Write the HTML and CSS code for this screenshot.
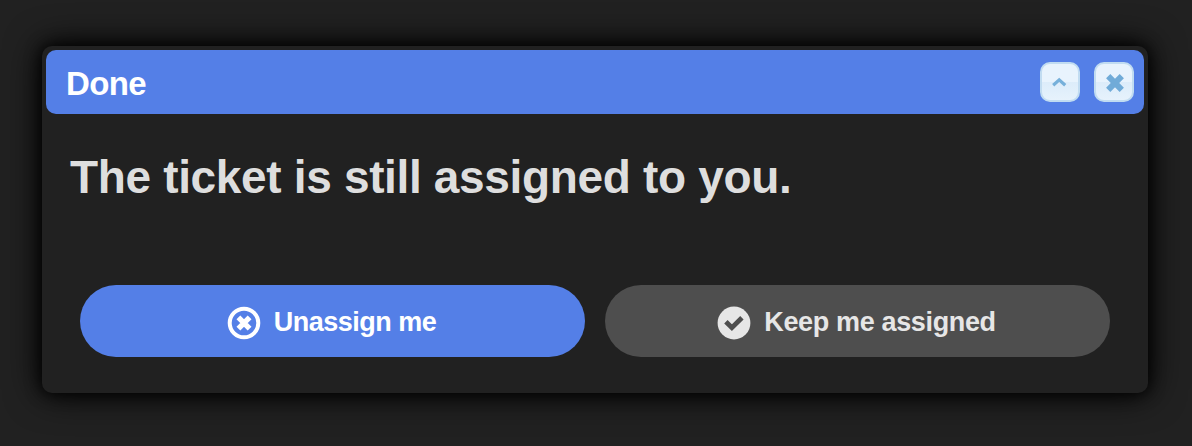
FILE: index.html
```html
<!DOCTYPE html>
<html lang="en">
<head>
<meta charset="utf-8">
<title>Done</title>
<link rel="stylesheet" href="styles.css">
</head>
<body>
<section class="dialog" role="dialog">
  <header class="titlebar">
    <h1 class="title">Done</h1>
    <div class="controls">
      <button class="control" aria-label="Collapse">
        <svg width="40" height="40" viewBox="0 0 40 40"><path d="M13.2 23.2 L19.2 17.8 L25.2 23.2" fill="none" stroke="#76b0da" stroke-width="3.2"/></svg>
      </button>
      <button class="control" aria-label="Close">
        <svg width="40" height="40" viewBox="0 0 40 40"><path d="M14.2 14.2 L27.8 27.8 M27.8 14.2 L14.2 27.8" fill="none" stroke="#70abd8" stroke-width="6"/></svg>
      </button>
    </div>
  </header>
  <div class="content">
    <h2 class="message">The ticket is still assigned to you.</h2>
    <div class="actions">
      <button class="action primary">
        <svg class="icon" width="34" height="34" viewBox="0 0 34 34"><circle cx="17" cy="17" r="14.3" fill="none" stroke="#fff" stroke-width="4"/><path d="M11.4 11.4 L22.6 22.6 M22.6 11.4 L11.4 22.6" fill="none" stroke="#fff" stroke-width="5.4"/></svg>
        <span class="label unassign">Unassign me</span>
      </button>
      <button class="action secondary">
        <svg class="icon" width="34" height="34" viewBox="0 0 34 34"><circle cx="17" cy="17" r="16.4" fill="#e6e6e6"/><path d="M8.9 15.7 L14.9 21.7 L24.9 11.7" fill="none" stroke="#4e4e4e" stroke-width="4.8"/></svg>
        <span class="label keep">Keep me assigned</span>
      </button>
    </div>
  </div>
</section>
</body>
</html>
```
FILE: styles.css
```css
* { box-sizing: border-box; }
body {
  margin: 0;
  height: 446px;
  padding: 46px 44px 53px 42px;
  background: #212121;
  font-family: "Liberation Sans", Arial, sans-serif;
  overflow: hidden;
}
.dialog {
  height: 347px;
  padding: 4px;
  border-radius: 10px;
  background: #212121;
  box-shadow: 0 0 36px #000, 0 0 16px #000;
}
.titlebar {
  display: flex;
  align-items: center;
  justify-content: space-between;
  height: 64px;
  padding: 0 10px 0 20px;
  border-radius: 10px;
  background: #547fe7;
}
.title {
  margin: 4px 0 0;
  color: #fff;
  font-size: 33px;
  line-height: 40px;
  letter-spacing: -0.6px;
}
.controls { display: flex; gap: 14px; }
.control {
  width: 40px;
  height: 40px;
  padding: 0;
  border: 2px solid #c1dcf1;
  border-radius: 10px;
  background: linear-gradient(#e8f3fd 0 50%, #dcecfa 50%, #e6f2fc);
}
.control svg { display: block; margin: -2px; }
.content { padding: 35px 34px 0; }
.message {
  margin: 0 0 0 -10px;
  height: 56px;
  color: #dedede;
  font-size: 46px;
  line-height: 56px;
  letter-spacing: -0.34px;
  white-space: nowrap;
}
.actions {
  display: grid;
  grid-template-columns: 505px 505px;
  gap: 20px;
  margin-top: 80px;
}
.action {
  display: flex;
  align-items: center;
  justify-content: center;
  gap: 13px;
  height: 72px;
  padding: 0 2px 0 0;
  border: 0;
  border-radius: 36px;
  font: bold 27px/32px "Liberation Sans", Arial, sans-serif;
}
.icon { margin-top: 3px; }
.label { margin-top: 2px; }
.unassign { letter-spacing: -0.5px; }
.keep { letter-spacing: -0.35px; }
.primary { background: #547fe7; color: #fff; }
.secondary { background: #4e4e4e; color: #e6e6e6; }
```
